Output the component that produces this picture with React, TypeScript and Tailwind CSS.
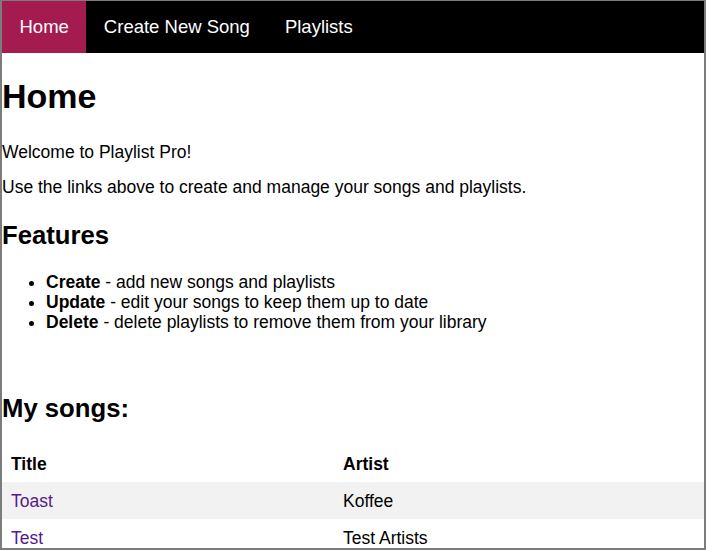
const songs = [
  { title: 'Toast', artist: 'Koffee' },
  { title: 'Test', artist: 'Test Artists' },
];

export default function App() {
  return (
    <div className="box-border h-[550px] w-[706px] overflow-hidden border-t border-x-2 border-b-2 border-[#7c7c7c] bg-white font-['Liberation_Sans',Arial,sans-serif] text-black">
      <nav className="flex h-[52px] bg-black text-[18.5px] text-white">
        <a className="flex items-center bg-[#a41b50] px-[17.5px]">Home</a>
        <a className="flex items-center px-[17.5px]">Create New Song</a>
        <a className="flex items-center px-[17.5px]">Playlists</a>
      </nav>

      <main className="text-[17.5px] leading-[20px]">
        <h1 className="mt-[24px] text-[34px] leading-[39px] font-bold">Home</h1>
        <p className="mt-[26px]">Welcome to Playlist Pro!</p>
        <p className="mt-[15px]">Use the links above to create and manage your songs and playlists.</p>

        <h2 className="mt-[24px] text-[25.7px] leading-[29px] font-bold">Features</h2>
        <ul className="mt-[22px] list-disc pl-[44px]">
          <li><b>Create</b> - add new songs and playlists</li>
          <li><b>Update</b> - edit your songs to keep them up to date</li>
          <li><b>Delete</b> - delete playlists to remove them from your library</li>
        </ul>

        <h2 className="mt-[62px] text-[25.7px] leading-[29px] font-bold">My songs:</h2>
        <table className="mt-[22px] w-full border-collapse text-left">
          <thead>
            <tr>
              <th className="w-[332px] px-[9px] py-[8.5px] font-bold">Title</th>
              <th className="px-[9px] py-[8.5px] font-bold">Artist</th>
            </tr>
          </thead>
          <tbody>
            {songs.map((song, i) => (
              <tr key={song.title} className={i % 2 === 0 ? 'bg-[#f2f2f2]' : ''}>
                <td className="px-[9px] py-[8.5px]">
                  <a className="text-[#551a8b]">{song.title}</a>
                </td>
                <td className="px-[9px] py-[8.5px]">{song.artist}</td>
              </tr>
            ))}
          </tbody>
        </table>
      </main>
    </div>
  );
}
